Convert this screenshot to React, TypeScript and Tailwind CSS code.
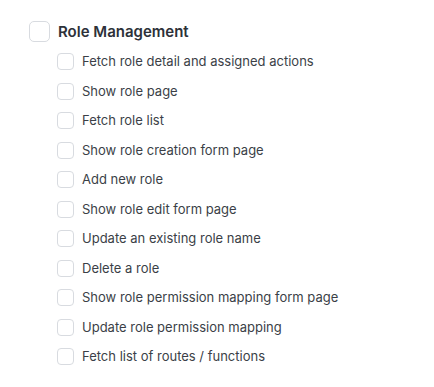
const children = [
  "Fetch role detail and assigned actions",
  "Show role page",
  "Fetch role list",
  "Show role creation form page",
  "Add new role",
  "Show role edit form page",
  "Update an existing role name",
  "Delete a role",
  "Show role permission mapping form page",
  "Update role permission mapping",
  "Fetch list of routes / functions",
];

export default function App() {
  return (
    <div className="h-[387px] w-[434px] bg-white pl-[29px] pt-[21px] font-['Inter',sans-serif]">
      {/* Parent */}
      <label className="flex items-center gap-[8px]">
        <span className="h-[21px] w-[21px] shrink-0 rounded-[5px] border border-[#d8dbe0] bg-white" />
        <span className="text-[15px] font-semibold leading-[21px] text-[#2d3139]">
          Role Management
        </span>
      </label>

      {/* Children */}
      <ul className="mt-[11px] flex flex-col gap-[12.5px] pl-[28px]">
        {children.map((c) => (
          <li key={c} className="flex items-center gap-[8px]">
            <span className="h-[17px] w-[17px] shrink-0 rounded-[4px] border border-[#d8dbe0] bg-white" />
            <span className="text-[13px] leading-[17px] text-[#3b3f47]">{c}</span>
          </li>
        ))}
      </ul>
    </div>
  );
}
